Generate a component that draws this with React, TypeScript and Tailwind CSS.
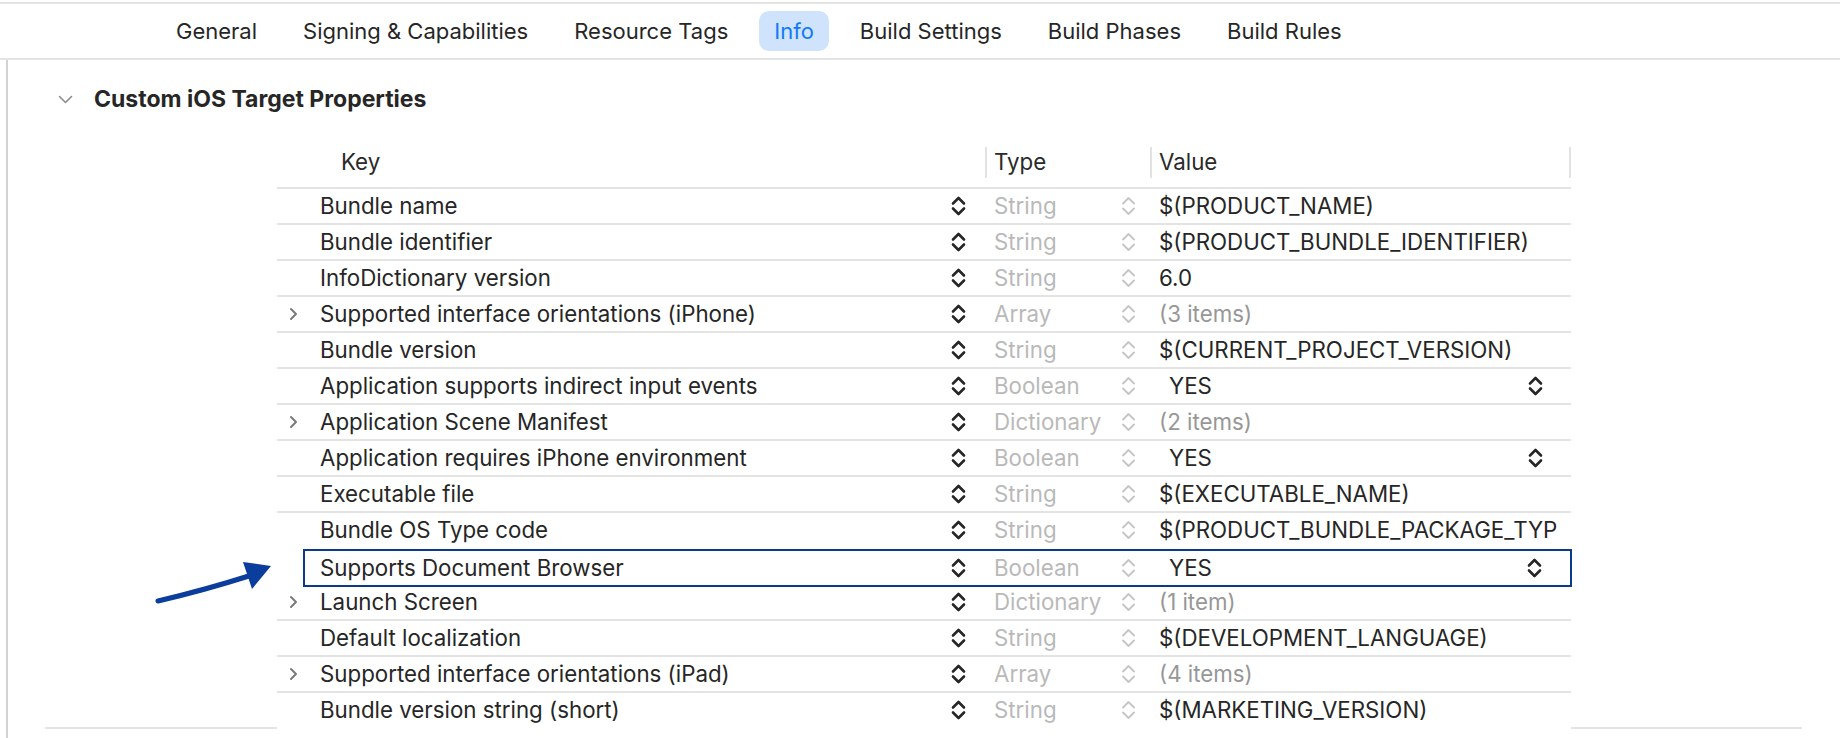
import React from 'react';

type Row = {
  name: string;
  type: string;
  value: string;
  expandable?: boolean;
  bool?: boolean;
  muted?: boolean;
  selected?: boolean;
  noBorder?: boolean;
};

const tabs = ['General', 'Signing & Capabilities', 'Resource Tags', 'Info', 'Build Settings', 'Build Phases', 'Build Rules'];

const rows: Row[] = [
  { name: 'Bundle name', type: 'String', value: '$(PRODUCT_NAME)' },
  { name: 'Bundle identifier', type: 'String', value: '$(PRODUCT_BUNDLE_IDENTIFIER)' },
  { name: 'InfoDictionary version', type: 'String', value: '6.0' },
  { name: 'Supported interface orientations (iPhone)', type: 'Array', value: '(3 items)', expandable: true, muted: true },
  { name: 'Bundle version', type: 'String', value: '$(CURRENT_PROJECT_VERSION)' },
  { name: 'Application supports indirect input events', type: 'Boolean', value: 'YES', bool: true },
  { name: 'Application Scene Manifest', type: 'Dictionary', value: '(2 items)', expandable: true, muted: true },
  { name: 'Application requires iPhone environment', type: 'Boolean', value: 'YES', bool: true },
  { name: 'Executable file', type: 'String', value: '$(EXECUTABLE_NAME)' },
  { name: 'Bundle OS Type code', type: 'String', value: '$(PRODUCT_BUNDLE_PACKAGE_TYP', noBorder: true },
  { name: 'Supports Document Browser', type: 'Boolean', value: 'YES', bool: true, selected: true },
  { name: 'Launch Screen', type: 'Dictionary', value: '(1 item)', expandable: true, muted: true },
  { name: 'Default localization', type: 'String', value: '$(DEVELOPMENT_LANGUAGE)' },
  { name: 'Supported interface orientations (iPad)', type: 'Array', value: '(4 items)', expandable: true, muted: true },
  { name: 'Bundle version string (short)', type: 'String', value: '$(MARKETING_VERSION)', noBorder: true },
];

// up/down popup arrows
const Stepper = ({ light }: { light?: boolean }) => (
  <svg
    width="15"
    height="22"
    viewBox="0 0 15 22"
    fill="none"
    stroke={light ? '#c6c6c6' : '#262626'}
    strokeWidth={light ? 1.9 : 2.6}
    strokeLinecap="round"
    strokeLinejoin="round"
    className="shrink-0"
  >
    <path d="M2 8.5l5.5-5.5 5.5 5.5" />
    <path d="M2 13.5l5.5 5.5 5.5-5.5" />
  </svg>
);

const Disclosure = () => (
  <svg width="11" height="14" viewBox="0 0 11 14" fill="none" stroke="#7b7b7b" strokeWidth="2" strokeLinecap="round" strokeLinejoin="round">
    <path d="M3 2l5 5-5 5" />
  </svg>
);

const RowCells = ({ row }: { row: Row }) => (
  <>
    <div className="w-[631px] shrink-0 whitespace-nowrap overflow-hidden text-[#262626]">{row.name}</div>
    <Stepper />
    <div className="w-[155px] shrink-0 pl-[28px] text-[#b9b9b9]">{row.type}</div>
    <Stepper light />
    {row.bool ? (
      <div className="flex flex-1 items-center justify-between pl-[33px] pr-[28px] text-[#262626]">
        <span>{row.value}</span>
        <Stepper />
      </div>
    ) : (
      <div className={`flex-1 whitespace-nowrap overflow-hidden pl-[23px] ${row.muted ? 'text-[#979797]' : 'text-[#262626]'}`}>
        {row.value}
      </div>
    )}
  </>
);

export default function App() {
  return (
    <div className="relative w-[1840px] h-[738px] overflow-hidden bg-white font-['Inter',sans-serif] text-[22.3px] text-[#262626]">
      {/* tab bar */}
      <div className="mt-[2px] h-[58px] border-y-2 border-[#e4e4e4] flex items-center pl-[161px] gap-[16px] text-[22px]">
        {tabs.map((t) => (
          <div
            key={t}
            className={`h-[40px] px-[15px] flex items-center rounded-[10px] ${t === 'Info' ? 'bg-[#cfe3fd] text-[#1479f5]' : 'text-[#262626]'}`}
          >
            {t}
          </div>
        ))}
      </div>

      <div className="flex h-[678px]">
        <div className="w-[6px] shrink-0" />
        <div className="w-[2px] shrink-0 bg-[#d3d3d3]" />
        <div className="flex-1">
          {/* section header */}
          <div className="mt-[24px] h-[30px] flex items-center pl-[50px]">
            <svg width="15" height="9" viewBox="0 0 15 9" fill="none" stroke="#8c8c8c" strokeWidth="1.6" strokeLinecap="round" strokeLinejoin="round">
              <path d="M1.5 1.5l6 6 6-6" />
            </svg>
            <span className="ml-[21px] text-[23px] font-bold">Custom iOS Target Properties</span>
          </div>

          <div className="mt-[27px] flex items-end">
            <div className="w-[37px] shrink-0" />
            <div className="w-[232px] h-[2px] shrink-0 bg-[#e4e4e4]" />

            {/* table */}
            <div className="w-[1294px] shrink-0">
              <div className="flex h-[48px] items-center pb-[4px] border-b-2 border-[#e4e4e4] text-[#2a2a2a]">
                <div className="w-[708px] shrink-0 pl-[64px]">Key</div>
                <div className="w-[2px] h-[31px] bg-[#e2e2e2]" />
                <div className="w-[163px] shrink-0 pl-[7px]">Type</div>
                <div className="w-[2px] h-[31px] bg-[#e2e2e2]" />
                <div className="flex-1 pl-[7px]">Value</div>
                <div className="w-[2px] h-[31px] bg-[#e2e2e2]" />
              </div>

              {rows.map((row) =>
                row.selected ? (
                  <div key={row.name} className="h-[36px]">
                    <div className="relative z-10 ml-[26px] w-[1269px] h-[38px] border-2 border-[#0b3a8d] bg-white flex items-center pl-[15px]">
                      <RowCells row={row} />
                    </div>
                  </div>
                ) : (
                  <div
                    key={row.name}
                    className={`flex h-[36px] items-center border-b-2 ${row.noBorder ? 'border-transparent' : 'border-[#e4e4e4]'}`}
                  >
                    <div className="w-[43px] shrink-0 flex pl-[11px]">{row.expandable && <Disclosure />}</div>
                    <RowCells row={row} />
                  </div>
                )
              )}
            </div>

            <div className="w-[231px] h-[2px] shrink-0 bg-[#e4e4e4]" />
          </div>
        </div>
      </div>

      {/* annotation arrow */}
      <svg className="absolute left-[150px] top-[555px]" width="130" height="50" viewBox="150 555 130 50">
        <path d="M158 601 Q 205 590 252 575" fill="none" stroke="#0b3d9c" strokeWidth="5" strokeLinecap="round" />
        <polygon points="243,562 271,566 252,589" fill="#0b3d9c" />
      </svg>
    </div>
  );
}
